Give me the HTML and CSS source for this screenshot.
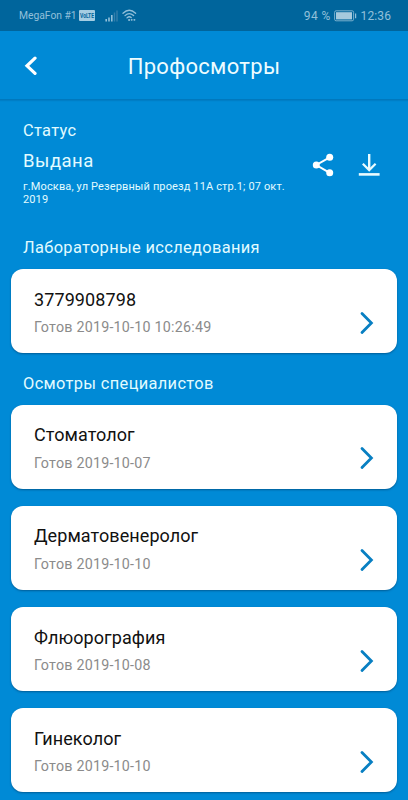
FILE: index.html
```html
<!DOCTYPE html>
<html lang="ru">
<head>
  <meta charset="UTF-8" />
  <title>Профосмотры</title>
  <meta name="viewport" content="width=device-width, initial-scale=1.0" />
  <link rel="stylesheet" href="styles.css">
</head>
<body>
  <div class="status-bar">
    <span class="carrier">MegaFon #1</span>
    <svg class="volte" width="16" height="11" viewBox="0 0 16 11">
      <rect width="16" height="11" rx="1" fill="#a5cde2" />
      <text x="1" y="8" textLength="14" lengthAdjust="spacingAndGlyphs">VoLTE</text>
    </svg>
    <svg class="signal" width="13" height="12" viewBox="0 0 13 12">
      <path d="M1.2 9v2.5M4 7.5v4M6.8 5v6.5" stroke="#92c0da" stroke-width="1.6" />
      <path d="M9.5 2.5v9M12 .5v11" stroke="#347fab" stroke-width="1.4" />
    </svg>
    <svg class="wifi" width="15" height="13" viewBox="0 0 15 13" fill="none" stroke="#92c0da" stroke-width="1.3" stroke-linecap="round">
      <path d="M1 4.2Q7.2-1.6 13.6 4.2M3 6.6Q7.2 2.6 11.6 6.6M5 8.9Q7.2 6.8 9.2 8.6" />
      <path d="M7 11h.2M9.6 10.8h.2M12.3 10.8h.2" stroke-width="1.8" />
    </svg>
    <span class="percent">94 %</span>
    <svg class="battery" width="23" height="12" viewBox="0 0 23 12">
      <rect x=".6" y=".8" width="19" height="10" rx="1.5" fill="none" stroke="#78b0ce" />
      <path d="M2 2.2h16v7.2H2z" fill="#a5c9dd" />
      <path d="M21.6 3.6v4.6" stroke="#92c0da" stroke-width="1.2" />
    </svg>
    <span class="time">12:36</span>
  </div>

  <header class="app-bar">
    <svg class="back" width="14" height="20" viewBox="0 0 14 20">
      <path d="M11 2.2 3 9.8l8 7.6" fill="none" stroke="#fff" stroke-width="3.2" stroke-linecap="round" stroke-linejoin="miter" />
    </svg>
    <h1>Профосмотры</h1>
  </header>

  <main>
    <section class="summary">
      <div class="summary-text">
        <p class="label">Статус</p>
        <p class="state">Выдана</p>
        <p class="address">г.Москва, ул Резервный проезд 11А стр.1; 07 окт. 2019</p>
      </div>
      <div class="actions">
        <svg width="22" height="24" viewBox="0 0 22 24" fill="#fff">
          <path d="M17.7 4.3 4.3 12l13.4 7.8" fill="none" stroke="#fff" stroke-width="2" />
          <circle cx="17.7" cy="4.3" r="3.5" />
          <circle cx="4.3" cy="12" r="3.5" />
          <circle cx="17.7" cy="19.8" r="3.5" />
        </svg>
        <svg width="22" height="24" viewBox="0 0 22 24" fill="none" stroke="#e9fbff">
          <path d="M11.2 1v16" stroke-width="2.4" />
          <path d="M4.8 10.7l6.4 6.4 6.4-6.4" stroke-width="2.2" />
          <path d="M.8 21.4h20.8" stroke-width="2.6" />
        </svg>
      </div>
    </section>

    <h2>Лабораторные исследования</h2>
    <div class="cards">
      <article class="card">
        <div>
          <h3 class="number">3779908798</h3>
          <p>Готов 2019-10-10 10:26:49</p>
        </div>
        <svg class="arrow" viewBox="0 0 14 24"><path d="M2 2.4 11.4 12 2 21.6" /></svg>
      </article>
    </div>

    <h2>Осмотры специалистов</h2>
    <div class="cards">
      <article class="card">
        <div>
          <h3>Стоматолог</h3>
          <p>Готов 2019-10-07</p>
        </div>
        <svg class="arrow" viewBox="0 0 14 24"><path d="M2 2.4 11.4 12 2 21.6" /></svg>
      </article>
      <article class="card">
        <div>
          <h3>Дерматовенеролог</h3>
          <p>Готов 2019-10-10</p>
        </div>
        <svg class="arrow" viewBox="0 0 14 24"><path d="M2 2.4 11.4 12 2 21.6" /></svg>
      </article>
      <article class="card">
        <div>
          <h3>Флюорография</h3>
          <p>Готов 2019-10-08</p>
        </div>
        <svg class="arrow" viewBox="0 0 14 24"><path d="M2 2.4 11.4 12 2 21.6" /></svg>
      </article>
      <article class="card">
        <div>
          <h3>Гинеколог</h3>
          <p>Готов 2019-10-10</p>
        </div>
        <svg class="arrow" viewBox="0 0 14 24"><path d="M2 2.4 11.4 12 2 21.6" /></svg>
      </article>
    </div>
  </main>
</body>
</html>
```
FILE: styles.css
```css
* {
  box-sizing: border-box;
}

body {
  margin: 0;
  height: 800px;
  overflow: hidden;
  background-color: #008ad6;
  color: #e2fbff;
  font-family: Roboto, "Liberation Sans", sans-serif;
}

h1, h2, h3, p {
  margin: 0;
  font-weight: normal;
}

svg {
  display: block;
  flex: none;
}

.status-bar {
  display: flex;
  align-items: center;
  height: 31px;
  padding: 0 17px 0 19px;
  background-color: #00659c;
  color: #92c0da;
  font-size: 12px;
  white-space: nowrap;
}

.carrier {
  width: 60px;
  font-size: 10.3px;
}

.volte {
  overflow: visible;
}

.volte text {
  fill: #00659c;
  font-size: 7px;
  font-weight: bold;
}

.signal {
  margin-left: 10px;
}

.wifi {
  margin-left: 4px;
}

.percent {
  margin-left: auto;
  letter-spacing: 0.4px;
}

.battery {
  margin: 0 4px 0 3px;
}

.time {
  letter-spacing: 0.1px;
}

.app-bar {
  position: relative;
  display: flex;
  align-items: center;
  justify-content: center;
  height: 69px;
  border-bottom: 1px solid #0078bd;
  box-shadow: 0 1px 1px rgba(0, 60, 110, 0.15);
}

.back {
  position: absolute;
  left: 24px;
  top: 25px;
}

h1 {
  color: #edfcff;
  font-size: 22px;
  line-height: 30px;
  letter-spacing: 0.3px;
  padding-top: 4px;
}

.summary {
  display: flex;
  justify-content: space-between;
  height: 138px;
  padding: 21px 28px 0 23px;
}

.summary-text {
  width: 275px;
}

.label {
  font-size: 16.4px;
  line-height: 20px;
  letter-spacing: 0.35px;
}

.state {
  margin-top: 8px;
  font-size: 18.5px;
  line-height: 24px;
  letter-spacing: 0.5px;
}

.address {
  margin-top: 7px;
  font-size: 11px;
  line-height: 13px;
  letter-spacing: 0.13px;
}

.actions {
  display: flex;
  gap: 24px;
  padding-top: 32px;
}

h2 {
  height: 31px;
  padding-left: 23px;
  font-size: 16.4px;
  line-height: 20px;
  letter-spacing: 0.35px;
}

.cards {
  display: grid;
  gap: 17px;
  padding: 0 11px;
  margin-bottom: 20.4px;
}

.card {
  display: flex;
  justify-content: space-between;
  height: 84.2px;
  padding: 19.6px 23px 0 23px;
  border-radius: 12px;
  background-color: #fff;
  box-shadow: 0 1px 2px rgba(0, 50, 90, 0.5);
}

h3 {
  color: #111;
  font-size: 18px;
  line-height: 22px;
  letter-spacing: 0.08px;
}

.number {
  letter-spacing: 0.1px;
}

.card p {
  margin-top: 7.6px;
  color: #8b8b8b;
  font-size: 14.3px;
  line-height: 18px;
  letter-spacing: 0.22px;
}

.arrow {
  width: 14px;
  height: 24px;
  margin-top: 22.3px;
  fill: none;
  stroke: #087fc2;
  stroke-width: 2.8;
  stroke-linecap: round;
}
```
